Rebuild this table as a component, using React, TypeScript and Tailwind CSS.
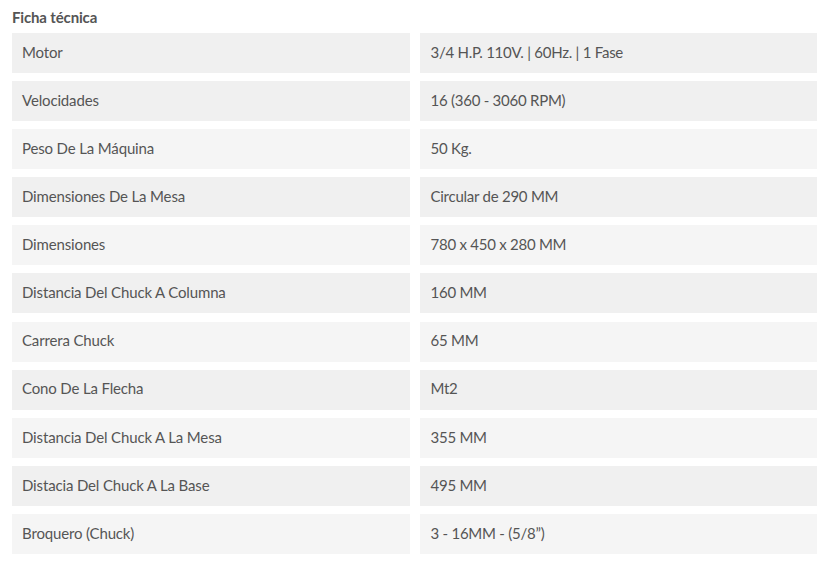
const rows: [string, string][] = [
  ['Motor', '3/4 H.P. 110V. | 60Hz. | 1 Fase'],
  ['Velocidades', '16 (360 - 3060 RPM)'],
  ['Peso De La Máquina', '50 Kg.'],
  ['Dimensiones De La Mesa', 'Circular de 290 MM'],
  ['Dimensiones', '780 x 450 x 280 MM'],
  ['Distancia Del Chuck A Columna', '160 MM'],
  ['Carrera Chuck', '65 MM'],
  ['Cono De La Flecha', 'Mt2'],
  ['Distancia Del Chuck A La Mesa', '355 MM'],
  ['Distacia Del Chuck A La Base', '495 MM'],
  ['Broquero (Chuck)', '3 - 16MM - (5/8”)'],
]

export default function App() {
  return (
    <div className="min-h-[563px] bg-white px-3 pt-[8px] text-[#555] font-['Lato',sans-serif]">
      <h3 className="text-[15px] font-bold leading-[19px] tracking-[-0.15px] text-[#555]">Ficha técnica</h3>
      <div className="mt-[6px] grid grid-cols-2 gap-x-[10px] gap-y-[8.1px]">
        {rows.map(([label, value], i) => {
          // first two rows are both dark, then it alternates
          const bg = i === 0 || i % 2 === 1 ? 'bg-[#f0f0f0]' : 'bg-[#f5f5f5]'
          return [
            <div key={label} className={`flex h-10 items-center px-[10px] pb-[2px] text-[15px] tracking-[-0.15px] ${bg}`}>
              {label}
            </div>,
            <div key={label + '-v'} className={`flex h-10 items-center px-[11px] pb-[2px] text-[15px] tracking-[-0.25px] ${bg}`}>
              {value}
            </div>,
          ]
        })}
      </div>
    </div>
  )
}
